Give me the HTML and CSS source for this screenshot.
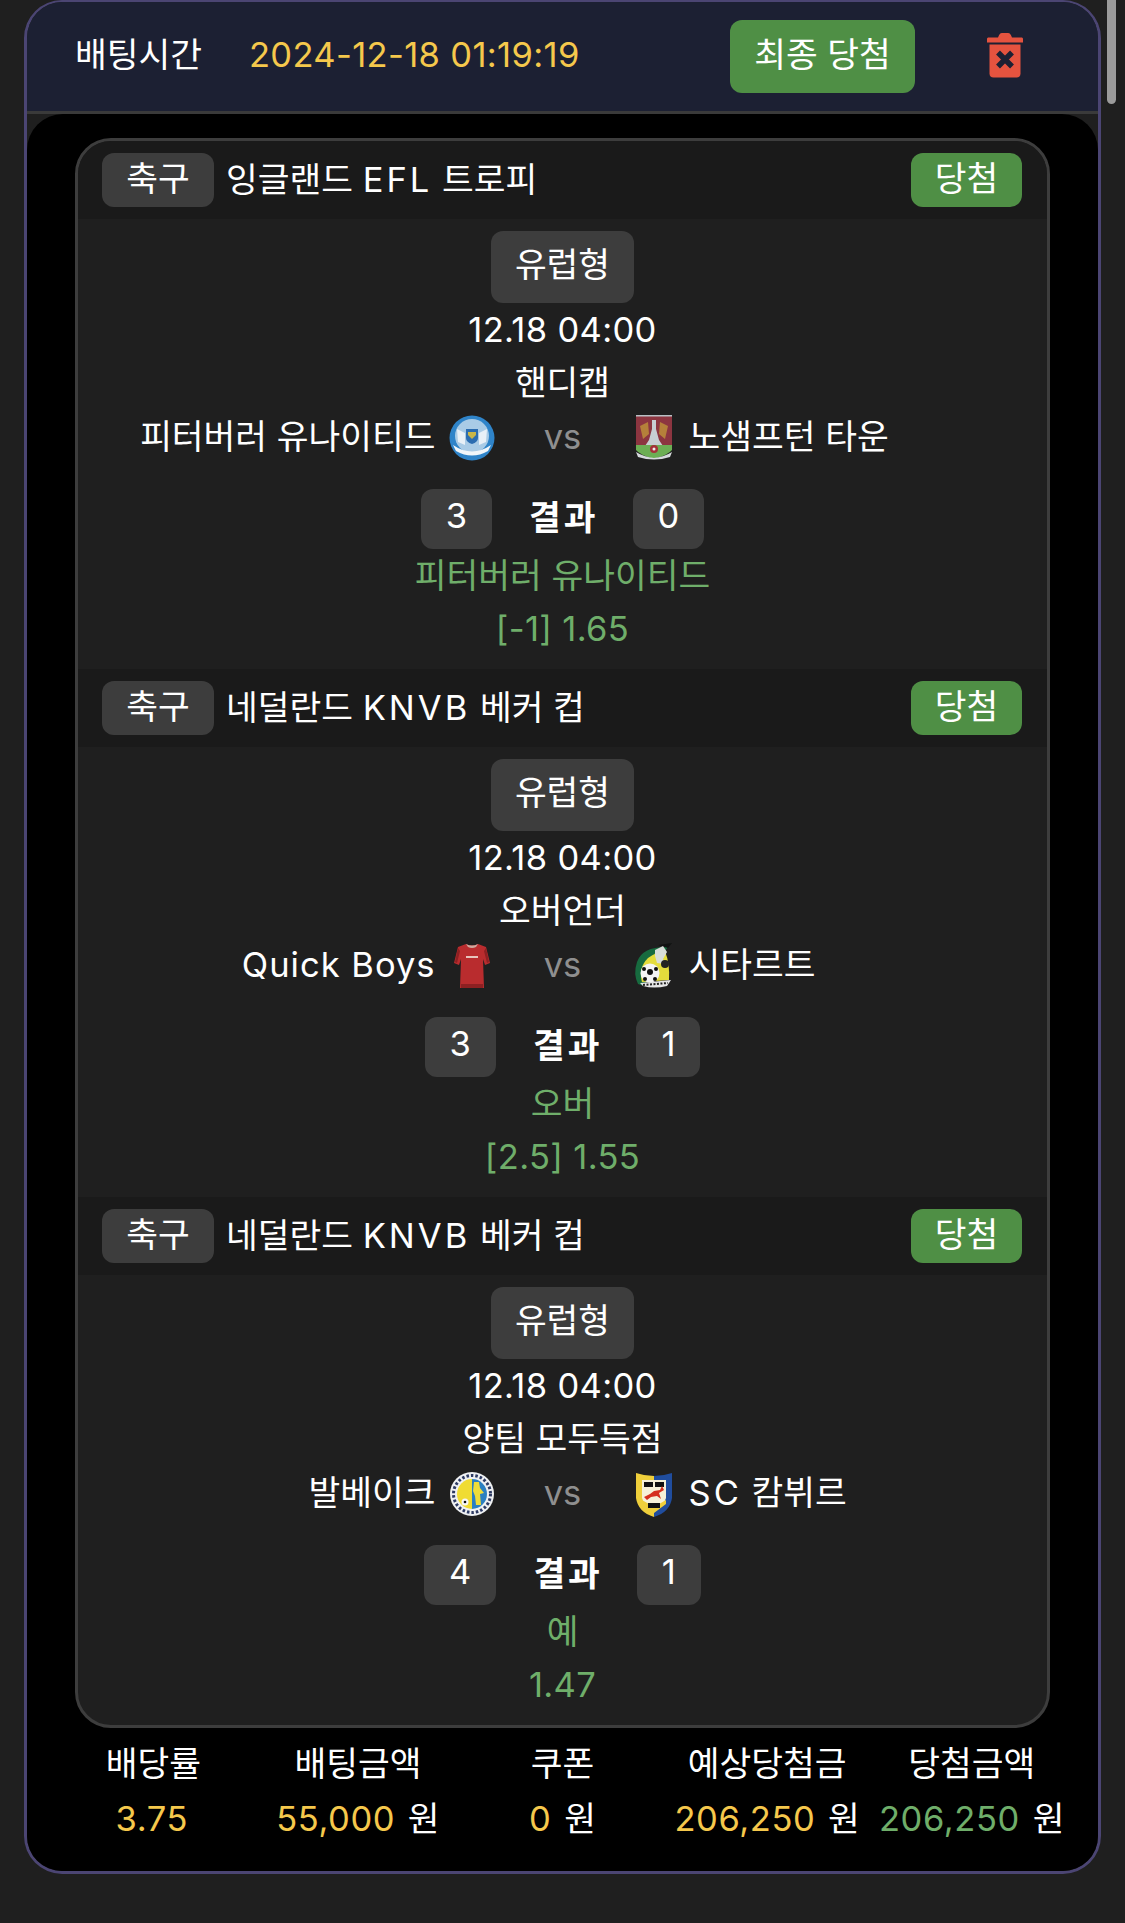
FILE: index.html
```html
<!DOCTYPE html>
<html lang="ko">
<head>
<meta charset="utf-8">
<title>배팅내역</title>
<link rel="stylesheet" href="styles.css">
</head>
<body>
<main class="bet-card">
  <header class="bet-head">
    <span class="head-label">배팅시간</span>
    <span class="head-date">2024-12-18 01:19:19</span>
    <span class="final-btn">최종 당첨</span>
    <svg class="trash" viewBox="0 0 36 46" aria-hidden="true">
      <path fill="#e5533f" d="M0 7.5 C0 6.5 .8 6 1.5 6 H11 C12 3.5 13 1.500 15 1.500 H21 C23 1.500 24 3.500 25 6 H34.500 C35.300 6 36 6.500 36 7.500 V11 H0 Z"/>
      <path fill="#e5533f" d="M2.500 13 H33.500 V42 C33.500 44.500 32 46 29.500 46 H6.500 C4 46 2.500 44.500 2.500 42 Z"/>
      <path stroke="#1c2033" stroke-width="5.500" d="M11 21 L25 35 M25 21 L11 35"/>
    </svg>
  </header>
  <div class="bet-body">
    <section class="games">
      <article class="game">
        <div class="game-head"><span class="sport">축구</span><span class="league">잉글랜드 <span class="wide">EFL</span> 트로피</span><span class="win">당첨</span></div>
        <div class="game-main">
          <span class="type">유럽형</span>
          <div class="line num-line">12.18 04:00</div>
          <div class="line">핸디캡</div>
          <div class="teams">
            <div class="team home"><span>피터버러 유나이티드</span>
              <svg class="logo" viewBox="0 0 48 48"><circle cx="24" cy="24" r="22.500" fill="#2f84c9"/><circle cx="24" cy="22" r="17" fill="#a9cbe6"/><path fill="#f1f6fa" d="M5 31 Q24 44 43 31 L40 37 Q24 46 8 37 Z"/><path fill="#e8f0f7" d="M9 15 L17 19 L17 31 L10 28 Z M39 15 L31 19 L31 31 L38 28 Z"/><path fill="#2b6cb0" d="M18 15 H30 V24 Q30 28 24 30 Q18 28 18 24 Z"/><path fill="#c9b648" d="M20 18 H28 V21 L24 25 L20 21 Z"/></svg>
            </div>
            <span class="vs">vs</span>
            <div class="team away">
              <svg class="logo" viewBox="0 0 48 48"><path fill="#8c3540" d="M6 1 H42 V33 H6 Z"/><path fill="#b9c0c4" d="M6 1 H42 V2.500 H6 Z"/><path fill="#b5803a" d="M10 12 L18 8 L19 20 L13 25 Z M38 12 L30 8 L29 20 L35 25 Z"/><path fill="#c7ced3" d="M22 6 H26 V15 L29 26 L33 32 H15 L19 26 L22 15 Z"/><path fill="#6cae54" d="M6 31 H42 V36 Q38 41 24 45 Q10 41 6 36 Z"/><circle cx="24" cy="35" r="4" fill="#a5313a"/><circle cx="24" cy="35" r="1.500" fill="#eee"/><path fill="#d6dadd" d="M6 38 Q14 43 24 44 Q34 43 42 38 L40 43 Q24 48 8 43 Z"/></svg>
              <span>노샘프턴 타운</span>
            </div>
          </div>
          <div class="score"><span class="num">3</span><strong>결과</strong><span class="num">0</span></div>
          <div class="line pick">피터버러 유나이티드</div>
          <div class="line pick num-line">[-1] 1.65</div>
        </div>
      </article>
      <article class="game">
        <div class="game-head"><span class="sport">축구</span><span class="league">네덜란드 <span class="wide">KNVB</span> 베커 컵</span><span class="win">당첨</span></div>
        <div class="game-main">
          <span class="type">유럽형</span>
          <div class="line num-line">12.18 04:00</div>
          <div class="line">오버언더</div>
          <div class="teams">
            <div class="team home"><span class="latin">Quick Boys</span>
              <svg class="logo" viewBox="0 0 48 48"><path fill="#b92c2e" d="M18 2 Q24 5 30 2 L38 5 L42 21 L37 23 L35 17 L36 46 H12 L13 17 L11 23 L6 21 L10 5 Z"/><path fill="#8d2022" d="M10 6 L7 20 L9 21 L12 9 Z M38 6 L41 20 L39 21 L36 9 Z M13 42 H35 V46 H13 Z"/><path fill="#cfa89e" d="M18 2 Q24 5 30 2 L28 5 Q24 7 20 5 Z"/><path fill="#e8c4bc" d="M18 14 H30 V16 H18 Z"/></svg>
            </div>
            <span class="vs">vs</span>
            <div class="team away">
              <svg class="logo" viewBox="0 0 48 48"><path fill="#176b3f" d="M41 1 L36 5 Q12 5 7 20 Q3 32 8 42 L14 44 L24 24 Z"/><path fill="#111" d="M28 3 L42 1 L38 6 Z"/><path fill="#e4dc3c" d="M35 9 Q40 22 39 38 L12 40 Q8 26 18 16 Q26 10 35 9 Z"/><circle cx="20" cy="31" r="9.500" fill="#f4f4f4"/><circle cx="20" cy="30" r="3" fill="#111"/><circle cx="14" cy="27" r="2" fill="#111"/><circle cx="26" cy="27" r="2" fill="#111"/><circle cx="15" cy="37" r="2" fill="#111"/><circle cx="25" cy="37" r="2" fill="#111"/><path fill="#d8dcd8" d="M25 8 L33 4 L37 10 L33 17 L35 22 L27 21 L25 14 Z"/><circle cx="35" cy="22" r="4" fill="#222"/><path fill="#e6e6e6" d="M10 41 L41 38 L37 44 Q24 47 13 44 Z"/><path stroke="#222" stroke-width="2" stroke-dasharray="2 1.500" d="M13 43 L38 41" fill="none"/></svg>
              <span>시타르트</span>
            </div>
          </div>
          <div class="score"><span class="num">3</span><strong>결과</strong><span class="num">1</span></div>
          <div class="line pick">오버</div>
          <div class="line pick num-line">[2.5] 1.55</div>
        </div>
      </article>
      <article class="game">
        <div class="game-head"><span class="sport">축구</span><span class="league">네덜란드 <span class="wide">KNVB</span> 베커 컵</span><span class="win">당첨</span></div>
        <div class="game-main">
          <span class="type">유럽형</span>
          <div class="line num-line">12.18 04:00</div>
          <div class="line">양팀 모두득점</div>
          <div class="teams">
            <div class="team home"><span>발베이크</span>
              <svg class="logo" viewBox="0 0 48 48"><circle cx="24" cy="24" r="22" fill="#eef0f2"/><circle cx="24" cy="24" r="18.500" fill="none" stroke="#2d3a63" stroke-width="3" stroke-dasharray="2.500 2"/><path fill="#f0dc33" d="M24 9 A15 15 0 0 0 24 39 Z"/><path fill="#2b7fc1" d="M24 9 A15 15 0 0 1 24 39 Z"/><path fill="#efdc38" d="M26 12 L31 12 L32 18 L36 23 L32 24 L33 35 L28 35 L27 26 L25 21 Z"/><circle cx="17" cy="32" r="3.500" fill="#f7f7f7"/><circle cx="17" cy="32" r="1.300" fill="#111"/></svg>
            </div>
            <span class="vs">vs</span>
            <div class="team away">
              <svg class="logo" viewBox="0 0 48 48"><path fill="#efcf3b" d="M6 3 Q15 6 24 6 V47 Q8 42 6 28 Z"/><path fill="#204d9e" d="M42 3 Q33 6 24 6 V47 Q40 42 42 28 Z"/><path fill="#f6f1d8" d="M12 10 H36 V28 Q34 36 24 41 Q14 36 12 28 Z"/><path fill="#efcf3b" d="M14 36 L24 43 L36 34 V30 L24 37 L12 30 Z"/><path fill="#111" d="M14 12 H23 V17 H14 Z M25 12 H34 V17 H25 Z M18 33 H30 V38 H18 Z"/><path fill="#d5301f" d="M14 27 L20 24 L24 21 L30 20 L32 16 L34 20 L29 23 L31 29 L27 26 L21 27 L17 30 Z"/></svg>
              <span><span class="wide">SC</span> 캄뷔르</span>
            </div>
          </div>
          <div class="score"><span class="num">4</span><strong>결과</strong><span class="num">1</span></div>
          <div class="line pick">예</div>
          <div class="line pick num-line">1.47</div>
        </div>
      </article>
    </section>
    <footer class="summary">
      <div class="stat"><div class="stat-label">배당률</div><div class="stat-value"><span class="gold">3.75</span></div></div>
      <div class="stat"><div class="stat-label">배팅금액</div><div class="stat-value"><span class="gold">55,000</span> 원</div></div>
      <div class="stat"><div class="stat-label">쿠폰</div><div class="stat-value"><span class="gold">0</span> 원</div></div>
      <div class="stat"><div class="stat-label">예상당첨금</div><div class="stat-value"><span class="gold">206,250</span> 원</div></div>
      <div class="stat"><div class="stat-label">당첨금액</div><div class="stat-value"><span class="green">206,250</span> 원</div></div>
    </footer>
  </div>
</main>
<div class="scroll-thumb"></div>
</body>
</html>
```
FILE: styles.css
```css
html, body { margin: 0; height: 1923px; overflow: hidden; background: #1f1f1f; }
body {
  position: relative;
  color: #fff;
  font-family: "Inter", "Noto Sans CJK KR", sans-serif;
  font-size: 34.5px;
  line-height: 53px;
  font-weight: 400;
}
.bet-card {
  box-sizing: border-box;
  width: 1077px;
  height: 1874px;
  margin-left: 24px;
  background: #1f1f1f;
  border: 3px solid #4b4573;
  border-top-width: 2px;
  border-radius: 38px;
  overflow: hidden;
}
.bet-head {
  display: flex;
  align-items: center;
  height: 109px;
  padding: 0 75px 0 48px;
  background: #1c2033;
  border-bottom: 3px solid #3a3a3a;
}
.head-date { margin-left: 47px; color: #f5c84c; line-height: 44px; padding-bottom: 3px; letter-spacing: .35px; }
.head-label { line-height: 44px; padding-bottom: 3px; }
.final-btn {
  margin-left: auto;
  width: 185px;
  height: 73px;
  line-height: 69px;
  text-align: center;
  background: #4f8f45;
  border-radius: 12px;
  margin-top: -1px;
}
.trash { width: 36px; height: 47px; margin: 0 0 5px 72px; }
.bet-body { height: 1760px; background: #000; border-radius: 36px 36px 0 0; padding-top: 24px; box-sizing: border-box; }
.games {
  width: 975px;
  box-sizing: border-box;
  margin: 0 auto;
  height: 1590px;
  border: 3px solid #3d3d3d;
  border-radius: 36px;
  overflow: hidden;
  background: #1f1f1f;
}
.game-head {
  display: flex;
  align-items: center;
  height: 78px;
  padding: 0 25px 0 24px;
  background: #1a1a1a;
}
.sport, .win {
  height: 54px;
  line-height: 51px;
  text-align: center;
  border-radius: 12px;
}
.sport { width: 112px; background: #3d3d3d; }
.win { width: 111px; background: #4f8f45; margin-left: auto; }
.league { margin-left: 12px; line-height: 50px; }
.wide { letter-spacing: 3px; }
.latin { letter-spacing: 1px; }
.num-line { letter-spacing: .35px; }
.game-main {
  height: 450px;
  padding-top: 12px;
  box-sizing: border-box;
  text-align: center;
}
.type {
  display: inline-block;
  width: 143px;
  height: 72px;
  line-height: 68px;
  background: #3d3d3d;
  border-radius: 12px;
  vertical-align: top;
}
.line { height: 53px; line-height: 53px; }
.teams {
  display: grid;
  grid-template-columns: 1fr 134px 1fr;
  align-items: center;
  height: 58px;
  line-height: 53px;
}
.team { display: flex; align-items: center; gap: 11px; }
.team > span { padding-bottom: 3px; }
.home { justify-content: flex-end; gap: 12px; }
.vs { color: #8f8f8f; padding-bottom: 3px; }
.logo { width: 48px; height: 48px; flex: none; }
.score {
  display: flex;
  justify-content: center;
  align-items: center;
  gap: 37px;
  margin-top: 22px;
  height: 60px;
}
.score strong { font-weight: 700; line-height: 54px; padding-bottom: 2px; letter-spacing: 3px; margin-right: -3px; }
.num {
  padding: 0 25px;
  height: 60px;
  line-height: 54px;
  background: #3d3d3d;
  border-radius: 12px;
}
.pick { color: #6fae6a; }
.summary {
  display: grid;
  grid-template-columns: repeat(5, 1fr);
  width: 1023px;
  margin: 8px auto 0;
  text-align: center;
}
.stat div { height: 56px; }
.stat-label { line-height: 56px; }
.stat-value { line-height: 54px; }
.gold, .green { letter-spacing: .6px; margin-right: 3px; }
.gold { color: #f5c84c; }
.green { color: #6fae6a; }
.scroll-thumb {
  position: absolute;
  top: 0;
  left: 1107px;
  width: 9px;
  height: 104px;
  background: #9b9b9b;
  border-radius: 0 0 5px 5px;
}
```
